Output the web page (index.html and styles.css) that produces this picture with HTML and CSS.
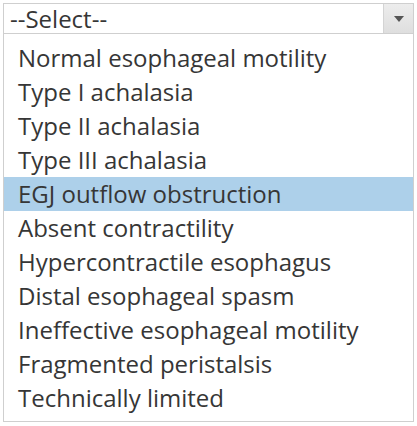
FILE: index.html
```html
<!DOCTYPE html>
<html>
<head>
<meta charset="utf-8">
<link rel="stylesheet" href="styles.css">
</head>
<body>
<div class="dropdown">
  <div class="select">
    <span class="value">--Select--</span>
    <span class="arrow"><svg width="10" height="6" viewBox="0 0 10 6"><path d="M0 0H10L5 6Z" fill="#555"/></svg></span>
  </div>
  <ul class="list">
    <li>Normal esophageal motility</li>
    <li>Type I achalasia</li>
    <li>Type II achalasia</li>
    <li>Type III achalasia</li>
    <li class="active">EGJ outflow obstruction</li>
    <li>Absent contractility</li>
    <li>Hypercontractile esophagus</li>
    <li>Distal esophageal spasm</li>
    <li>Ineffective esophageal motility</li>
    <li>Fragmented peristalsis</li>
    <li>Technically limited</li>
  </ul>
</div>
</body>
</html>
```
FILE: styles.css
```css
html, body { margin: 0; padding: 0; background: #fff; }
body { padding: 3px 3px 0 3px; font-family: "Open Sans", sans-serif; color: #363636; }
.dropdown { width: 411px; }
.select {
  display: flex;
  height: 29px;
  border: 1px solid #cfcfcf;
  align-items: stretch;
}
.value { flex: 1; font-size: 24px; line-height: 29px; padding-left: 6px; }
.arrow {
  width: 29px;
  border-left: 1px solid #d4d4d4;
  background: linear-gradient(#ededed, #dedede);
  display: flex; align-items: center; justify-content: center;
}
.list {
  list-style: none; margin: 0;
  padding: 7px 0 6px 0;
  border: 1px solid #cfcfcf; border-top: none;
}
.list li {
  height: 34px; line-height: 34px;
  font-size: 24px;
  padding-left: 14px;
  white-space: nowrap;
}
.list li.active { background: #add0ea; }
```
